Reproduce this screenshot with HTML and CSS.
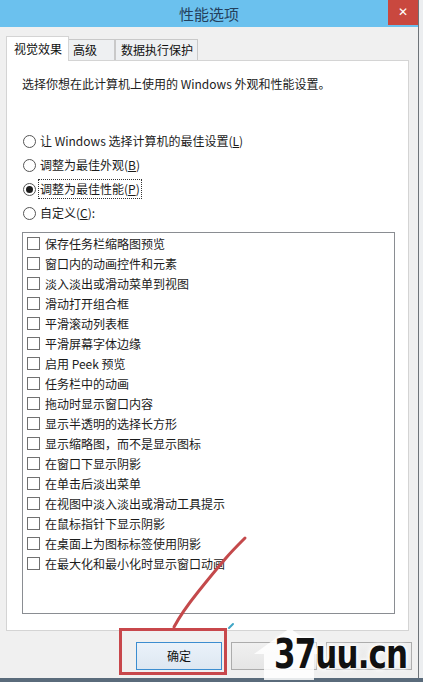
FILE: index.html
```html
<!DOCTYPE html>
<html lang="zh-CN">
<head>
<meta charset="utf-8">
<title>性能选项</title>
<link rel="stylesheet" href="styles.css">
</head>
<body>
<div class="screen">
  <div class="window">
    <div class="titlebar">
      <span></span>
      <span class="title">性能选项</span>
      <span class="close">✕</span>
    </div>
    <div class="tabs">
      <div class="tab active t1">视觉效果</div>
      <div class="tab t2">高级</div>
      <div class="tab t3">数据执行保护</div>
    </div>
    <div class="panel">
      <p class="desc">选择你想在此计算机上使用的 Windows 外观和性能设置。</p>
      <div class="radios">
        <div class="radio"><span class="circle"></span><span class="rlabel">让 Windows 选择计算机的最佳设置(<u>L</u>)</span></div>
        <div class="radio"><span class="circle"></span><span class="rlabel">调整为最佳外观(<u>B</u>)</span></div>
        <div class="radio"><span class="circle checked"></span><span class="rlabel focus">调整为最佳性能(<u>P</u>)</span></div>
        <div class="radio"><span class="circle"></span><span class="rlabel">自定义(<u>C</u>):</span></div>
      </div>
      <div class="listbox">
        <div class="row"><span class="box"></span>保存任务栏缩略图预览</div>
        <div class="row"><span class="box"></span>窗口内的动画控件和元素</div>
        <div class="row"><span class="box"></span>淡入淡出或滑动菜单到视图</div>
        <div class="row"><span class="box"></span>滑动打开组合框</div>
        <div class="row"><span class="box"></span>平滑滚动列表框</div>
        <div class="row"><span class="box"></span>平滑屏幕字体边缘</div>
        <div class="row"><span class="box"></span>启用 Peek 预览</div>
        <div class="row"><span class="box"></span>任务栏中的动画</div>
        <div class="row"><span class="box"></span>拖动时显示窗口内容</div>
        <div class="row"><span class="box"></span>显示半透明的选择长方形</div>
        <div class="row"><span class="box"></span>显示缩略图，而不是显示图标</div>
        <div class="row"><span class="box"></span>在窗口下显示阴影</div>
        <div class="row"><span class="box"></span>在单击后淡出菜单</div>
        <div class="row"><span class="box"></span>在视图中淡入淡出或滑动工具提示</div>
        <div class="row"><span class="box"></span>在鼠标指针下显示阴影</div>
        <div class="row"><span class="box"></span>在桌面上为图标标签使用阴影</div>
        <div class="row"><span class="box"></span>在最大化和最小化时显示窗口动画</div>
      </div>
    </div>
    <div class="buttons">
      <div class="btn ok">确定</div>
      <div class="btn"></div>
      <div class="btn"></div>
    </div>
  </div>
  <div class="strip"></div>

  <svg class="annot" width="423" height="682" viewBox="0 0 423 682">
    <path d="M245 538 C 238 545 231 552 226 558 C 214 572 206 582 198 592 C 190 602 182 612 174 627" fill="none" stroke="#c4494b" stroke-width="3" stroke-linecap="round"/>
    <path d="M229 628 L233 624" stroke="#3fa6c6" stroke-width="2" stroke-linecap="round"/>
    <polygon points="264,680 264,654 254,654 290,628 324,654 314,654 314,680" fill="#ffffff" opacity="0.85"/>
  </svg>
  <div class="redbox"></div>
  <div class="watermark">37uu.cn</div>
</div>
</body>
</html>
```

FILE: styles.css
```css
html, body {
  margin: 0;
  padding: 0;
}
body {
  width: 423px;
  height: 682px;
  overflow: hidden;
  background: #eceef0;
  font-family: "Noto Sans CJK SC", "Noto Sans", sans-serif;
  font-size: 12px;
  color: #1b1b1b;
}
.screen {
  position: relative;
  width: 423px;
  height: 682px;
}
.window {
  width: 419px;
  height: 678px;
  box-sizing: border-box;
  background: #f0f0f0;
  border-right: 1px solid #6e7378;
}
.titlebar {
  height: 27px;
  background: #6bc1ee;
  display: grid;
  grid-template-columns: 1fr auto 1fr;
  align-items: start;
}
.title {
  font-size: 15px;
  line-height: 27px;
  color: #24405c;
}
.close {
  justify-self: end;
  width: 30px;
  height: 25px;
  background: #c9483f;
  color: #fff;
  font-family: "DejaVu Sans", sans-serif;
  font-size: 12px;
  font-weight: bold;
  line-height: 24px;
  text-align: center;
}
.tabs {
  display: flex;
  align-items: flex-end;
  margin-top: 9px;
  padding-left: 6px;
  height: 24px;
}
.tab {
  box-sizing: border-box;
  height: 21px;
  line-height: 19px;
  border: 1px solid #c9c9c9;
  border-bottom: none;
  background: #eef0f2;
  white-space: nowrap;
  color: #111;
}
.tab.active {
  position: relative;
  z-index: 1;
  height: 25px;
  margin-bottom: -1px;
  line-height: 23px;
  background: #fff;
  border-color: #d4d4d4;
}
.t1 { width: 63px; padding-left: 7px; }
.t2 { width: 46px; padding-left: 4px; border-left: none; }
.t3 { width: 83px; padding-left: 5px; border-left: 1px solid #c9c9c9; }
.panel {
  box-sizing: border-box;
  width: 403px;
  height: 571px;
  margin-left: 6px;
  background: #fff;
  border: 1px solid #d4d4d4;
  padding: 13px 0 0 15px;
}
.desc {
  margin: 0;
  line-height: 20px;
  color: #222;
}
.radios {
  margin-top: 35px;
  display: flex;
  flex-direction: column;
}
.radio {
  height: 24px;
  display: flex;
  align-items: center;
  gap: 2px;
  color: #1b1b1b;
}
.circle {
  box-sizing: border-box;
  width: 13px;
  height: 13px;
  border-radius: 50%;
  border: 1px solid #555;
  background: #fff;
  display: flex;
  align-items: center;
  justify-content: center;
  margin-left: 1px;
}
.circle.checked::after {
  content: "";
  width: 7px;
  height: 7px;
  border-radius: 50%;
  background: #1c1c1c;
}
.rlabel {
  line-height: 18px;
  padding: 0 1px;
  border: 1px solid transparent;
}
.rlabel.focus {
  border: 1px dotted #333;
}
.listbox {
  box-sizing: border-box;
  margin-top: 7px;
  width: 373px;
  height: 382px;
  border: 1px solid #8a8d92;
  padding-top: 0;
}
.row {
  height: 20px;
  display: flex;
  align-items: center;
  gap: 5px;
  padding-left: 4px;
  white-space: nowrap;
  color: #1b1b1b;
}
.box {
  box-sizing: border-box;
  width: 13px;
  height: 13px;
  border: 1px solid #707070;
  background: #fff;
  flex: none;
}
.buttons {
  display: flex;
  gap: 9px;
  margin-top: 11px;
  padding-left: 136px;
}
.btn {
  box-sizing: border-box;
  width: 86px;
  height: 28px;
  border: 1px solid #acacac;
  background: linear-gradient(#f0f0f0, #e5e5e5);
  text-align: center;
  line-height: 26px;
  color: #111;
}
.btn.ok {
  border-color: #3c8dd0;
  background: linear-gradient(#eaf2fa, #dde7f1);
}
.strip {
  height: 4px;
  background: #5a6b7b;
}
.annot {
  position: absolute;
  left: 0;
  top: 0;
  pointer-events: none;
}
.redbox {
  position: absolute;
  left: 119px;
  top: 628px;
  width: 108px;
  height: 47px;
  box-sizing: border-box;
  border: 3px solid #c8474b;
}
.watermark {
  position: absolute;
  left: 274px;
  top: 630px;
  font-family: "DejaVu Sans Condensed", "DejaVu Sans", sans-serif;
  font-stretch: condensed;
  font-weight: bold;
  font-size: 40px;
  line-height: 48px;
  letter-spacing: -1px;
  color: #111;
  white-space: nowrap;
  transform: scaleX(0.86);
  transform-origin: left center;
  text-shadow: 0 0 3px #fff, 0 0 6px #fff, 0 0 8px #fff;
}
```
